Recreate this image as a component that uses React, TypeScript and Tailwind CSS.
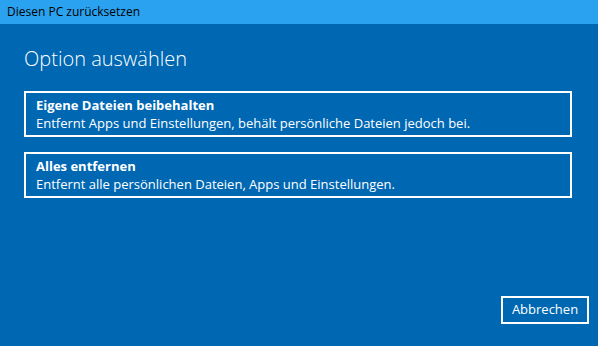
const options = [
  {
    title: 'Eigene Dateien beibehalten',
    text: 'Entfernt Apps und Einstellungen, behält persönliche Dateien jedoch bei.',
  },
  {
    title: 'Alles entfernen',
    text: 'Entfernt alle persönlichen Dateien, Apps und Einstellungen.',
  },
];

export default function App() {
  return (
    <div
      className="flex h-[346px] w-[598px] flex-col bg-[#0067b3] text-white"
      style={{ fontFamily: '"Open Sans", "Noto Sans", sans-serif' }}>
      {/* title bar */}
      <div className="flex h-[24px] items-center bg-[#2aa2ef] pl-[7px] text-[12px] text-black">
        Diesen PC zurücksetzen
      </div>

      <div className="flex flex-1 flex-col px-[24px] pt-[20px] pb-[22px]">
        <h1 className="text-[20px] font-light leading-[30px]">Option auswählen</h1>

        <div className="mt-[17px] flex w-[548px] flex-col gap-[15px]">
          {options.map((opt) => (
            <div
              key={opt.title}
              className="flex h-[46px] flex-col justify-center border-2 border-white pl-[10px] text-[13px] leading-[18px]">
              <div className="font-bold">{opt.title}</div>
              <div>{opt.text}</div>
            </div>
          ))}
        </div>

        <div className="mt-auto flex justify-end">
          <button className="-mr-[15px] h-[28px] w-[88px] border-2 border-white text-[13px]">
            Abbrechen
          </button>
        </div>
      </div>
    </div>
  );
}
